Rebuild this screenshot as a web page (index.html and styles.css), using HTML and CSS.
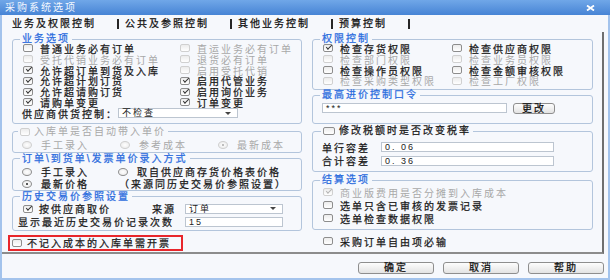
FILE: index.html
```html
<!DOCTYPE html>
<html lang="zh-CN">
<head>
    <meta charset="UTF-8">
    <title>采购系统选项</title>
    <link rel="stylesheet" href="styles.css">
</head>
<body>
    <div class="window">
        <div class="titlebar">
            <span class="title">采购系统选项</span>
            <svg class="close" width="9" height="6" viewBox="0 0 9 6">
                <path d="M1 0.5 L8 5.5 M8 0.5 L1 5.5" stroke="#fff" stroke-width="1.8" fill="none"/>
            </svg>
        </div>
        <div class="frame">
            <div class="tabs">
                <span class="tab active">业务及权限控制</span>
                <span class="tab">公共及参照控制</span>
                <span class="tab">其他业务控制</span>
                <span class="tab">预算控制</span>
            </div>

            <div class="panel">
                <!-- left column -->
                <div class="col col-left">
                    <fieldset class="group g-biz">
                        <legend>业务选项</legend>
                        <div class="grid grid-biz">
                            <label class="opt"><span class="box"></span>普通业务必有订单</label>
                            <label class="opt disabled"><span class="box"></span>直运业务必有订单</label>
                            <label class="opt disabled"><span class="box"></span>受托代销业务必有订单</label>
                            <label class="opt disabled"><span class="box"></span>退货必有订单</label>
                            <label class="opt"><span class="box on"></span>允许超订单到货及入库</label>
                            <label class="opt disabled"><span class="box"></span>启用受托代销</label>
                            <label class="opt"><span class="box on"></span>允许超计划订货</label>
                            <label class="opt"><span class="box on"></span>启用代管业务</label>
                            <label class="opt"><span class="box on"></span>允许超请购订货</label>
                            <label class="opt"><span class="box on"></span>启用询价业务</label>
                            <label class="opt"><span class="box on"></span>请购单变更</label>
                            <label class="opt"><span class="box on"></span>订单变更</label>
                        </div>
                        <div class="supplier-row">
                            <span class="supplier-label">供应商供货控制：</span>
                            <span class="select supplier-select">不检查<i class="arrow"></i></span>
                        </div>
                    </fieldset>

                    <fieldset class="group g-instock disabled">
                        <legend><span class="box"></span>入库单是否自动带入单价</legend>
                        <div class="grid grid-three">
                            <label class="opt"><span class="radio"></span>手工录入</label>
                            <label class="opt"><span class="radio"></span>参考成本</label>
                            <label class="opt"><span class="radio on"></span>最新成本</label>
                        </div>
                    </fieldset>

                    <fieldset class="group g-price">
                        <legend>订单\到货单\发票单价录入方式</legend>
                        <div class="grid grid-price">
                            <label class="opt"><span class="radio"></span>手工录入</label>
                            <label class="opt"><span class="radio"></span>取自供应商存货价格表价格</label>
                            <label class="opt"><span class="radio on"></span>最新价格</label>
                            <span class="note">（来源同历史交易价参照设置）</span>
                        </div>
                    </fieldset>

                    <fieldset class="group g-history">
                        <legend>历史交易价参照设置</legend>
                        <div class="grid grid-history">
                            <label class="opt"><span class="box on"></span>按供应商取价</label>
                            <span class="src-label">来源</span>
                            <span class="select">订单<i class="arrow"></i></span>
                            <span class="count-label">显示最近历史交易价记录次数</span>
                            <span class="input">15</span>
                        </div>
                    </fieldset>

                    <div class="highlight">
                        <label class="opt"><span class="box"></span>不记入成本的入库单需开票</label>
                    </div>
                </div>

                <!-- right column -->
                <div class="col col-right">
                    <fieldset class="group g-rights">
                        <legend>权限控制</legend>
                        <div class="grid grid-rights">
                            <label class="opt"><span class="box on"></span>检查存货权限</label>
                            <label class="opt"><span class="box"></span>检查供应商权限</label>
                            <label class="opt disabled"><span class="box"></span>检查部门权限</label>
                            <label class="opt disabled"><span class="box"></span>检查业务员权限</label>
                            <label class="opt"><span class="box"></span>检查操作员权限</label>
                            <label class="opt"><span class="box"></span>检查金额审核权限</label>
                            <label class="opt disabled"><span class="box"></span>检查采购类型权限</label>
                            <label class="opt disabled"><span class="box"></span>检查工厂权限</label>
                        </div>
                    </fieldset>

                    <fieldset class="group g-password">
                        <legend>最高进价控制口令</legend>
                        <div class="password-row">
                            <span class="input password">***</span>
                            <span class="btn small">更改</span>
                        </div>
                    </fieldset>

                    <fieldset class="group g-tax">
                        <legend class="plain"><span class="box"></span>修改税额时是否改变税率</legend>
                        <div class="grid grid-tax">
                            <span>单行容差</span>
                            <span class="input">0. 06</span>
                            <span>合计容差</span>
                            <span class="input">0. 36</span>
                        </div>
                    </fieldset>

                    <fieldset class="group g-settle">
                        <legend>结算选项</legend>
                        <div class="grid grid-settle">
                            <label class="opt disabled"><span class="box on"></span>商业版费用是否分摊到入库成本</label>
                            <label class="opt"><span class="box"></span>选单只含已审核的发票记录</label>
                            <label class="opt"><span class="box"></span>选单检查数据权限</label>
                        </div>
                    </fieldset>

                    <label class="opt free-item"><span class="box"></span>采购订单自由项必输</label>
                </div>
            </div>

            <div class="buttons">
                <span class="btn">确定</span>
                <span class="btn">取消</span>
                <span class="btn">帮助</span>
            </div>
        </div>
    </div>
</body>
</html>
```

FILE: styles.css
```css
* {
    box-sizing: border-box;
}

body {
    margin: 0;
    width: 610px;
    height: 280px;
    overflow: hidden;
    font-family: "Liberation Sans", "Noto Sans CJK SC", sans-serif;
    font-size: 10px;
    letter-spacing: 2px;
    color: #1a1a1a;
    -webkit-text-stroke: 0.25px currentColor;
    background: #f6f8fc;
}

.window {
    display: flex;
    flex-direction: column;
    height: 280px;
}

.titlebar {
    height: 15px;
    flex: none;
    display: flex;
    align-items: center;
    justify-content: space-between;
    padding: 0 15px 0 5px;
    background: linear-gradient(#70a7e8, #4784d5);
    color: #f2f7ff;
    line-height: 15px;
    -webkit-text-stroke: 0;
}

.frame {
    flex: 1;
    display: flex;
    flex-direction: column;
    border: 2px solid #a3c3ec;
    border-top: none;
    background: #f6f8fc;
}

/* tabs */
.tabs {
    height: 17px;
    flex: none;
    display: flex;
    align-items: center;
    padding-left: 10px;
}

.tab {
    line-height: 10px;
    padding-right: 21px;
    border-right: 2px solid #262626;
    margin-right: 6px;
    color: #111;
}

/* main panel */
.panel {
    height: 222px;
    flex: none;
    display: flex;
    gap: 10px;
    padding: 3px 9px 0 10px;
    margin-right: 4px;
    border-right: 2px solid #6f6f6f;
    border-bottom: 2px solid #8c8c8c;
}

.col {
    display: flex;
    flex-direction: column;
}

.col > * {
    flex: none;
}

.col-left {
    width: 290px;
}

.col-right {
    width: 281px;
}

.group {
    margin: 0;
    min-width: 0;
    padding: 0 4px 0 10px;
    border: 1px solid #b3c5dc;
    border-radius: 3px;
}

legend {
    height: 8px;
    line-height: 8px;
    padding: 0 2px;
    margin-left: -3px;
    color: #2b6cde;
    display: flex;
    align-items: center;
    gap: 4px;
}

legend.plain {
    color: #1a1a1a;
}

.grid {
    display: grid;
}

.opt {
    display: flex;
    align-items: center;
    gap: 7px;
    white-space: nowrap;
}

.disabled,
.disabled legend {
    color: #a8a8a8;
    -webkit-text-stroke: 0;
}

/* checkbox and radio */
.box {
    position: relative;
    flex: none;
    width: 10px;
    height: 8px;
    border: 1px solid #8d8d8d;
    border-radius: 2px;
    background: linear-gradient(#ececec, #fff);
}

.box.on::after {
    content: '';
    position: absolute;
    left: 2px;
    top: 0;
    width: 5px;
    height: 2px;
    border-left: 1.4px solid #333;
    border-bottom: 1.4px solid #333;
    transform: rotate(-45deg);
}

.disabled .box {
    border-color: #d0d0d0;
}

.disabled .box.on::after {
    border-color: #b4b4b4;
}

.radio {
    position: relative;
    flex: none;
    width: 10px;
    height: 8px;
    border: 1px solid #8d8d8d;
    border-radius: 50%;
    background: radial-gradient(#fff, #e6e6e6);
}

.radio.on::after {
    content: '';
    position: absolute;
    left: 3px;
    top: 2px;
    width: 2px;
    height: 2px;
    border-radius: 50%;
    background: #222;
}

.disabled .radio {
    border-color: #cfcfcf;
}

.disabled .radio.on::after {
    background: #aaa;
}

/* inputs */
.input,
.select {
    height: 10px;
    line-height: 8px;
    border: 1px solid #bcc5d0;
    background: #fff;
    padding-left: 3px;
    font-size: 9px;
    color: #222;
    -webkit-text-stroke: 0;
}

.select {
    display: flex;
    align-items: center;
    justify-content: space-between;
    padding-right: 6px;
}

.arrow {
    width: 0;
    height: 0;
    border-top: 3px solid #444;
    border-left: 3px solid transparent;
    border-right: 3px solid transparent;
}

.btn {
    display: flex;
    align-items: center;
    justify-content: center;
    width: 76px;
    height: 12px;
    border: 1px solid #8e8e8e;
    border-radius: 3px;
    background: linear-gradient(#fdfdfd, #e3e3e3);
    color: #111;
    line-height: 10px;
}

/* left groups */
.g-biz {
    padding-bottom: 4px;
}

.grid-biz {
    grid-template-columns: 157px 1fr;
    grid-auto-rows: 10.8px;
}

.supplier-row {
    height: 10.8px;
    display: flex;
    align-items: center;
    margin-left: -1px;
}

.supplier-label {
    width: 96px;
}

.supplier-select {
    width: 120px;
}

.g-instock {
    margin-top: 4px;
    padding-top: 4px;
    padding-bottom: 2px;
}

.g-instock legend {
    margin-left: -5px;
}

.grid-three {
    grid-template-columns: 98px 98px 1fr;
    grid-auto-rows: 10px;
}

.grid-three .opt {
    gap: 9px;
    margin-left: -1px;
}

.g-price {
    margin-top: 2px;
    padding-top: 3px;
}

.grid-price {
    grid-template-columns: 96px 1fr;
    grid-auto-rows: 12px;
    margin-left: -1px;
}

.grid-price .opt {
    gap: 9px;
}

.note {
    display: flex;
    align-items: center;
    white-space: nowrap;
    margin-left: 1px;
}

.g-history {
    margin-top: 2px;
    padding-top: 1.5px;
    padding-bottom: 1.5px;
}

.grid-history {
    grid-template-columns: 129px 33px 98px;
    grid-auto-rows: 13px;
    align-items: center;
}

.grid-history .opt {
    gap: 6px;
}

.count-label {
    grid-column: 1 / 3;
    margin-left: -5px;
    white-space: nowrap;
}

.highlight {
    margin: 4px 0 0 -4px;
    width: 175px;
    height: 16px;
    border: 2px solid #e8262b;
    display: flex;
    align-items: center;
    padding-left: 2px;
}

.highlight .opt {
    gap: 5px;
}

/* right groups */
.grid-rights {
    grid-template-columns: 129px 1fr;
    grid-auto-rows: 10.8px;
}

.g-rights {
    padding-bottom: 3px;
}

.g-password {
    margin-top: 1px;
    padding-top: 4px;
    padding-bottom: 9px;
}

.password-row {
    display: flex;
    gap: 6px;
    margin-left: -1px;
}

.password {
    width: 185px;
    line-height: 9px;
}

.btn.small {
    width: 42px;
    height: 11px;
}

.g-tax {
    margin-top: 3px;
    padding-top: 7px;
    padding-bottom: 5.5px;
}

.g-tax legend {
    margin-left: -2px;
}

.g-tax legend .box {
    width: 12px;
}

.grid-tax {
    grid-template-columns: 59px 173px;
    grid-auto-rows: 10px;
    row-gap: 3.5px;
    align-items: center;
    margin-left: -1px;
}

.g-settle {
    margin-top: 4px;
    padding-top: 1.5px;
    padding-bottom: 4.5px;
}

.grid-settle {
    grid-auto-rows: 13px;
}

.free-item {
    height: 11px;
    margin: 5.5px 0 0 11px;
}

/* bottom buttons */
.buttons {
    flex: 1;
    display: flex;
    justify-content: flex-end;
    gap: 9px;
    padding: 8px 4px 0 0;
}
```
